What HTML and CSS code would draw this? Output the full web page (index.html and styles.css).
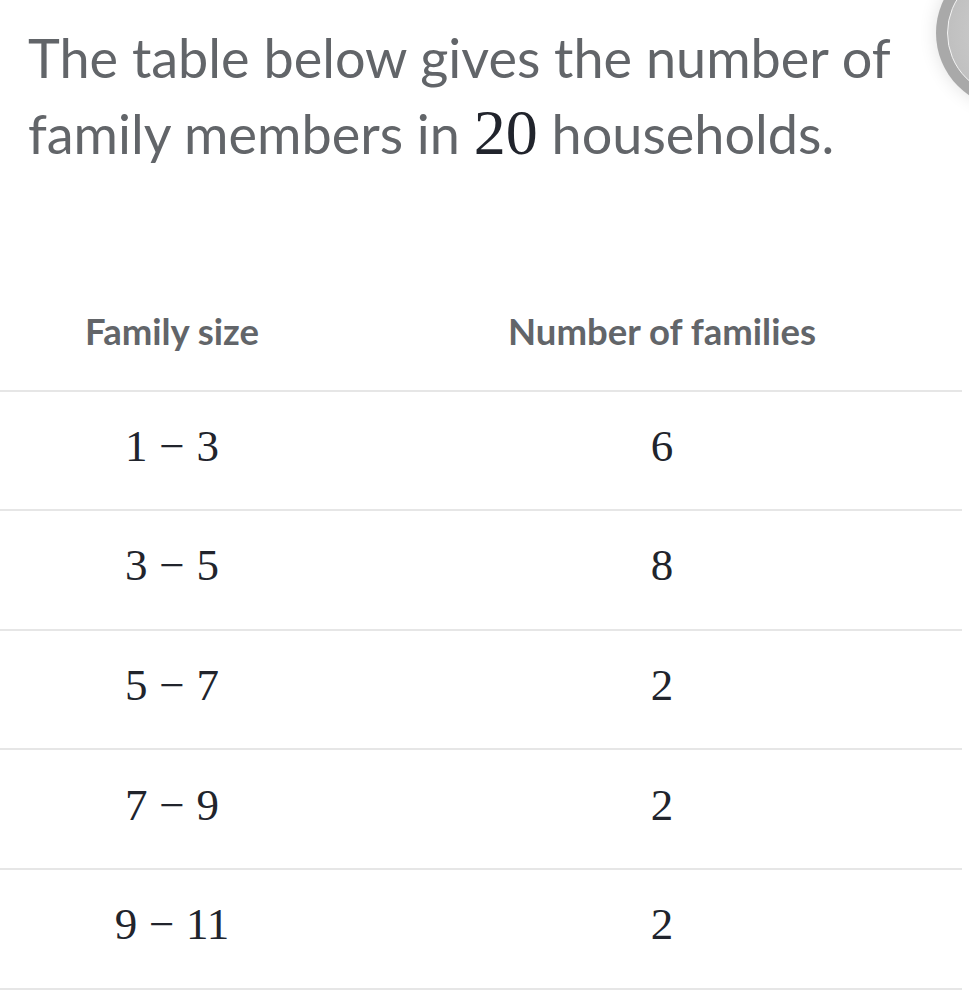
FILE: index.html
```html
<!DOCTYPE html>
<html lang="en">
<head>
<meta charset="utf-8">
<title>Family members</title>
<link rel="stylesheet" href="styles.css">
</head>
<body>
<div class="page">
  <p class="question">The table below gives the number of family members in <span class="math big">20</span> households.</p>
  <div class="fab" aria-hidden="true"><div class="fab-inner"></div></div>
  <div class="table">
    <div class="row head">
      <div class="cell c1">Family size</div>
      <div class="cell c2">Number of families</div>
    </div>
    <div class="row">
      <div class="cell c1"><span class="math">1<span class="op">−</span>3</span></div>
      <div class="cell c2"><span class="math">6</span></div>
    </div>
    <div class="row">
      <div class="cell c1"><span class="math">3<span class="op">−</span>5</span></div>
      <div class="cell c2"><span class="math">8</span></div>
    </div>
    <div class="row">
      <div class="cell c1"><span class="math">5<span class="op">−</span>7</span></div>
      <div class="cell c2"><span class="math">2</span></div>
    </div>
    <div class="row">
      <div class="cell c1"><span class="math">7<span class="op">−</span>9</span></div>
      <div class="cell c2"><span class="math">2</span></div>
    </div>
    <div class="row">
      <div class="cell c1"><span class="math">9<span class="op">−</span>11</span></div>
      <div class="cell c2"><span class="math">2</span></div>
    </div>
  </div>
</div>
</body>
</html>
```

FILE: styles.css
```css
html, body {
  margin: 0;
  padding: 0;
  background: #ffffff;
}

body {
  overflow: hidden;
  font-family: Lato, "Noto Sans", sans-serif;
  color: #626569;
}

.page {
  position: relative;
  width: 969px;
  min-height: 1000px;
  overflow: hidden;
}

.question {
  margin: 0;
  padding: 20px 60px 0 28px;
  font-size: 54px;
  line-height: 76px;
}

.math {
  font-family: "Liberation Serif", "DejaVu Serif", serif;
  color: #21242c;
  font-size: 45px;
}

.math.big {
  font-size: 64px;
  line-height: 60px;
}

.op {
  margin: 0 0.26em;
}

.fab {
  position: absolute;
  left: 936px;
  top: -42px;
  width: 150px;
  height: 150px;
  box-sizing: border-box;
  border-radius: 50%;
  background: #a9a9a9;
  padding: 11px;
  box-shadow: 0 0 18px rgba(0, 0, 0, 0.12);
}

.fab-inner {
  width: 100%;
  height: 100%;
  box-sizing: border-box;
  border-radius: 50%;
  border: 1px solid #f4f4f4;
  background: radial-gradient(circle at 60% 50%, #cdcdcd 0, #c6c6c6 55%, #b9b9b9 100%);
}

.table {
  margin-top: 100px;
  width: 962px;
}

.row {
  display: grid;
  grid-template-columns: 344px 1fr;
  height: 119.6px;
  box-sizing: border-box;
  border-bottom: 2px solid #e6e6e6;
  align-items: center;
}

.cell {
  text-align: center;
}

.c2 {
  padding-left: 18px;
}

.head .cell {
  font-weight: 700;
  font-size: 36.5px;
  color: #626569;
}

.row:not(.head) .cell {
  padding-bottom: 9px;
}
```
